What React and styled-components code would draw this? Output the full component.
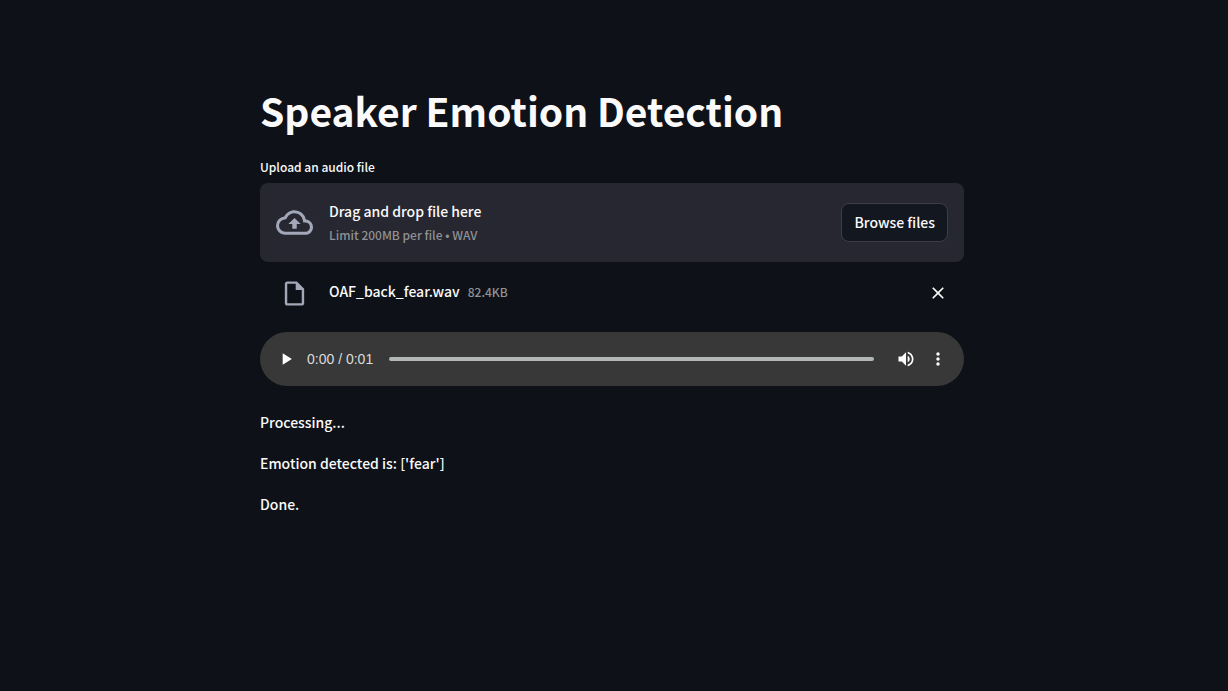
import React from "react";
import styled, { createGlobalStyle } from "styled-components";
import {
  MdOutlineCloudUpload,
  MdOutlineInsertDriveFile,
  MdClose,
  MdPlayArrow,
  MdVolumeUp,
  MdMoreVert,
} from "react-icons/md";

const GlobalStyle = createGlobalStyle`
  *, *::before, *::after { box-sizing: border-box; }
  body {
    margin: 0;
    background: #0e1117;
    color: #fafafa;
    font-family: "Source Sans Pro", "Noto Sans CJK JP", sans-serif;
    font-size: 14px;
    font-weight: 500;
    line-height: 26px;
  }
  button {
    font: inherit;
    color: inherit;
    cursor: pointer;
  }
`;

const Page = styled.main`
  min-height: 100vh;
  padding: 80px 20px 80px 16px;
`;

const Column = styled.div`
  max-width: 704px;
  margin: 0 auto;
`;

const Title = styled.h1`
  margin: 0;
  padding-bottom: 16px;
  font-size: 39px;
  font-weight: 700;
  line-height: 60px;
`;

const Label = styled.label`
  display: block;
  font-size: 12px;
  line-height: 22px;
  padding-bottom: 5px;
`;

const Dropzone = styled.section`
  display: flex;
  align-items: center;
  gap: 16px;
  padding: 16px;
  border-radius: 8px;
  background: #262730;
`;

const IconSlot = styled.span`
  display: flex;
  align-items: center;
  justify-content: center;
  flex: none;
  width: 37px;
  min-height: 30px;
  color: #a3a8b8;
`;

const DropText = styled.div`
  flex: 1;
  min-width: 0;
`;

const Line = styled.div`
  line-height: 25px;
`;

const Small = styled.span`
  display: block;
  font-size: 12px;
  line-height: 22px;
  color: #8f9193;
`;

const HiddenInput = styled.input`
  display: none;
`;

const BrowseButton = styled.button`
  flex: none;
  height: 39px;
  padding: 0 12px 2px;
  border: 1px solid #3c3d45;
  border-radius: 8px;
  background: #131720;
`;

const FileRow = styled.div`
  display: flex;
  align-items: center;
  gap: 16px;
  padding: 16px;
`;

const FileInfo = styled.div`
  display: flex;
  align-items: center;
  flex: 1;
  gap: 8px;
  min-width: 0;
  padding-bottom: 3px;
`;

const IconButton = styled.button`
  display: flex;
  flex: none;
  padding: 0;
  border: 0;
  background: none;
`;

const Player = styled.div`
  display: flex;
  align-items: center;
  height: 54px;
  margin: 8px 0 24px;
  padding: 0 16px;
  border-radius: 27px;
  background: #373837;
  color: #ffffff;
`;

const Time = styled.span`
  margin: 0 16px 0 11px;
  font-family: "Liberation Sans", Arial, sans-serif;
  font-size: 14px;
  font-weight: 400;
  color: #dcdcdc;
  white-space: nowrap;
`;

const Seek = styled.input`
  appearance: none;
  flex: 1;
  min-width: 0;
  height: 4px;
  margin: 0 22px 0 0;
  border-radius: 2px;
  background: #b4b8b5;

  &::-webkit-slider-thumb {
    appearance: none;
    width: 0;
    height: 0;
  }
`;

const PlayerActions = styled.div`
  display: flex;
  gap: 12px;
`;

const Output = styled.div`
  display: flex;
  flex-direction: column;
  gap: 16px;
`;

const Paragraph = styled.p`
  margin: 0;
  line-height: 25px;
`;

export default function App() {
  const fileInput = React.useRef(null);

  return (
    <Page>
      <GlobalStyle />
      <Column>
        <Title>Speaker Emotion Detection</Title>
        <Label htmlFor="audio-file">Upload an audio file</Label>
        <Dropzone>
          <IconSlot>
            <MdOutlineCloudUpload size={37} />
          </IconSlot>
          <DropText>
            <Line>Drag and drop file here</Line>
            <Small>Limit 200MB per file • WAV</Small>
          </DropText>
          <HiddenInput id="audio-file" type="file" accept=".wav" ref={fileInput} />
          <BrowseButton type="button" onClick={() => fileInput.current.click()}>
            Browse files
          </BrowseButton>
        </Dropzone>
        <FileRow>
          <IconSlot>
            <MdOutlineInsertDriveFile size={29} />
          </IconSlot>
          <FileInfo>
            <Line>OAF_back_fear.wav</Line>
            <Small>82.4KB</Small>
          </FileInfo>
          <IconButton type="button" aria-label="Remove file">
            <MdClose size={20} />
          </IconButton>
        </FileRow>
        <Player>
          <IconButton type="button" aria-label="Play">
            <MdPlayArrow size={20} />
          </IconButton>
          <Time>0:00 / 0:01</Time>
          <Seek type="range" min="0" max="1" step="0.01" defaultValue="0" aria-label="Seek" />
          <PlayerActions>
            <IconButton type="button" aria-label="Mute">
              <MdVolumeUp size={20} />
            </IconButton>
            <IconButton type="button" aria-label="More options">
              <MdMoreVert size={20} />
            </IconButton>
          </PlayerActions>
        </Player>
        <Output>
          <Paragraph>Processing...</Paragraph>
          <Paragraph>Emotion detected is: ['fear']</Paragraph>
          <Paragraph>Done.</Paragraph>
        </Output>
      </Column>
    </Page>
  );
}
